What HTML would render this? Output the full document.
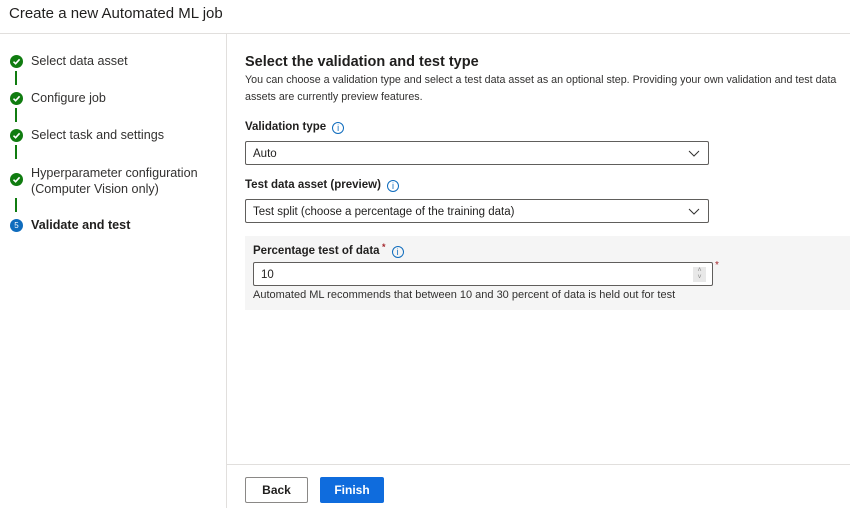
<!DOCTYPE html>
<html><head><style>
*{box-sizing:border-box;margin:0;padding:0}
body{width:850px;height:508px;background:#fff;font-family:"Liberation Sans",sans-serif;color:#201f1e;position:relative;overflow:hidden}
.a{position:absolute}
.t{font-size:12.6px;color:#323130;white-space:nowrap}
.circ{position:absolute;left:10px;width:13px;height:13px;border-radius:50%;background:#107c10}
.circ svg{position:absolute;left:2px;top:2px}
.line{position:absolute;left:15px;width:2px;background:#107c10}
.lbl{font-size:11.5px;font-weight:bold;white-space:nowrap}
.info{display:inline-block;width:12px;height:12px;border:1px solid #0f6cbd;border-radius:50%;color:#0f6cbd;font-size:9px;text-align:center;line-height:10px;margin-left:6px;vertical-align:-1px;font-weight:normal}
.dd{position:absolute;border:1px solid #605e5c;border-radius:2px;font-size:11.5px;padding:6px 7px;background:#fff}
.chev{position:absolute;right:8px;top:6px}
</style></head><body>
<div class="a" style="left:9px;top:5px;font-size:15px;color:#201f1e">Create a new Automated ML job</div>
<div class="a" style="left:0;top:33px;width:850px;height:1px;background:#e1dfdd"></div>
<div class="a" style="left:226px;top:34px;width:1px;height:474px;background:#e1dfdd"></div>
<div class="a" style="left:227px;top:464px;width:623px;height:1px;background:#e1dfdd"></div>

<div class="circ" style="top:55px"><svg width="9" height="9" viewBox="0 0 9 9"><path d="M1.5 4.7L3.6 6.7 7.6 2.3" stroke="#fff" stroke-width="1.6" fill="none"/></svg></div>
<div class="line" style="top:71px;height:14px"></div>
<div class="circ" style="top:92px"><svg width="9" height="9" viewBox="0 0 9 9"><path d="M1.5 4.7L3.6 6.7 7.6 2.3" stroke="#fff" stroke-width="1.6" fill="none"/></svg></div>
<div class="line" style="top:108px;height:14px"></div>
<div class="circ" style="top:129px"><svg width="9" height="9" viewBox="0 0 9 9"><path d="M1.5 4.7L3.6 6.7 7.6 2.3" stroke="#fff" stroke-width="1.6" fill="none"/></svg></div>
<div class="line" style="top:145px;height:14px"></div>
<div class="circ" style="top:173px"><svg width="9" height="9" viewBox="0 0 9 9"><path d="M1.5 4.7L3.6 6.7 7.6 2.3" stroke="#fff" stroke-width="1.6" fill="none"/></svg></div>
<div class="line" style="top:198px;height:14px"></div>
<div class="circ" style="top:219px;background:#0f6cbd;color:#fff;font-size:8px;text-align:center;line-height:13px">5</div>

<div class="a t" style="left:31px;top:54px">Select data asset</div>
<div class="a t" style="left:31px;top:91px">Configure job</div>
<div class="a t" style="left:31px;top:128px">Select task and settings</div>
<div class="a t" style="left:31px;top:165px;line-height:16px">Hyperparameter configuration<br>(Computer Vision only)</div>
<div class="a t" style="left:31px;top:218px;font-weight:bold;color:#201f1e">Validate and test</div>

<div class="a" style="left:245px;top:54px;font-size:14.5px;font-weight:bold;color:#201f1e">Select the validation and test type</div>
<div class="a" style="left:245px;top:72px;font-size:10.7px;line-height:17px;color:#323130;white-space:nowrap">You can choose a validation type and select a test data asset as an optional step. Providing your own validation and test data<br>assets are currently preview features.</div>

<div class="a lbl" style="left:245px;top:121px">Validation type<span class="info">i</span></div>
<div class="dd" style="left:245px;top:141px;width:464px;height:24px">Auto<svg class="chev" width="12" height="10" viewBox="0 0 12 10"><path d="M1 3L6 8 11 3" stroke="#323130" fill="none"/></svg></div>
<div class="a lbl" style="left:245px;top:179px">Test data asset (preview)<span class="info">i</span></div>
<div class="dd" style="left:245px;top:199px;width:464px;height:24px">Test split (choose a percentage of the training data)<svg class="chev" width="12" height="10" viewBox="0 0 12 10"><path d="M1 3L6 8 11 3" stroke="#323130" fill="none"/></svg></div>

<div class="a" style="left:245px;top:236px;width:605px;height:74px;background:#f5f5f5"></div>
<div class="a lbl" style="left:253px;top:242px">Percentage test of data<span style="color:#a4262c;font-size:9px;vertical-align:4px"> *</span><span class="info">i</span></div>
<div class="dd" style="left:253px;top:262px;width:460px;height:24px">10<div class="a" style="right:6px;top:4px;width:13px;height:15px;background:#e8e8e8;font-size:7px;color:#888;text-align:center;line-height:7px">˄<br>˅</div></div>
<div class="a" style="left:715px;top:260px;color:#a4262c;font-size:10px">*</div>
<div class="a" style="left:253px;top:289px;font-size:11px;color:#323130;white-space:nowrap">Automated ML recommends that between 10 and 30 percent of data is held out for test</div>

<div class="a" style="left:245px;top:477px;width:63px;height:26px;border:1px solid #8a8886;border-radius:2px;font-size:12px;font-weight:bold;text-align:center;line-height:24px">Back</div>
<div class="a" style="left:320px;top:477px;width:64px;height:26px;background:#0f6cdd;border-radius:2px;font-size:12px;font-weight:bold;color:#fff;text-align:center;line-height:26px">Finish</div>
</body></html>
